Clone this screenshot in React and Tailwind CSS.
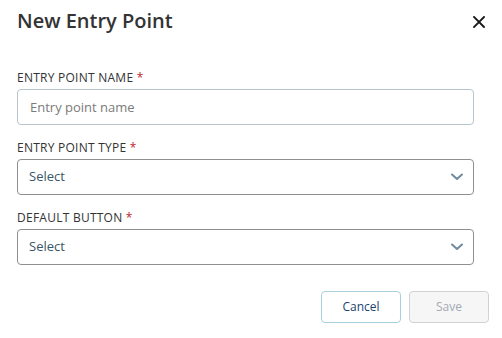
import { useState } from "react";

function Chevron() {
    return (
        <svg width="12" height="8" viewBox="0 0 12 8" fill="none" className="shrink-0">
            <path d="M1 1.5 L6 6 L11 1.5" stroke="#6f8ba0" strokeWidth="2" strokeLinecap="round" strokeLinejoin="round" />
        </svg>
    );
}

function Label({ children }) {
    return (
        <div className="h-4 mb-[3px] text-[12px] leading-4 text-[#333333] tracking-[0.25px]">
            {children} <span className="text-[#c0262d]">*</span>
        </div>
    );
}

function SelectBox({ value }) {
    return (
        <button
            type="button"
            className="w-full h-[36px] flex items-center justify-between pl-[11px] pr-[10px] border border-[#8f8f8f] rounded-[4px] bg-white text-left"
        >
            <span className="text-[13px] text-[#3a5567]">{value}</span>
            <Chevron />
        </button>
    );
}

export default function App() {
    const [name, setName] = useState("");
    return (
        <div className="w-[502px] h-[338px] bg-white font-['Open_Sans',sans-serif] flex flex-col">
            <div className="flex items-start justify-between pl-[17px] pr-[17px] pt-[7px]">
                <h2 className="text-[20px] leading-[28px] font-semibold text-[#333333]">New Entry Point</h2>
                <button type="button" className="mt-[9px] w-[12px] h-[12px] flex items-center justify-center">
                    <svg width="12" height="12" viewBox="0 0 12 12">
                        <path d="M1 1 L11 11 M11 1 L1 11" stroke="#1a1a1a" strokeWidth="1.9" strokeLinecap="square" />
                    </svg>
                </button>
            </div>

            <div className="flex flex-col gap-[15px] pl-[17px] pr-[28px] mt-[35px]">
                <div>
                    <Label>ENTRY POINT NAME</Label>
                    <input
                        value={name}
                        onChange={(e) => setName(e.target.value)}
                        placeholder="Entry point name"
                        className="w-full h-[36px] px-[12px] border border-[#b7c5cf] rounded-[4px] text-[13px] text-[#333333] placeholder:text-[#7b7b7b] outline-none"
                    />
                </div>
                <div>
                    <Label>ENTRY POINT TYPE</Label>
                    <SelectBox value="Select" />
                </div>
                <div>
                    <Label>DEFAULT BUTTON</Label>
                    <SelectBox value="Select" />
                </div>
            </div>

            <div className="flex justify-end gap-2 pr-[13px] mt-[26px]">
                <button
                    type="button"
                    className="w-[80px] h-[32px] rounded-[4px] border border-[#a9cedd] bg-white text-[12px] text-[#1b4470] font-medium"
                >
                    Cancel
                </button>
                <button
                    type="button"
                    disabled
                    className="w-[80px] h-[32px] rounded-[4px] border border-[#d2d2d2] bg-[#f6f6f6] text-[12px] text-[#a3abb3] font-medium"
                >
                    Save
                </button>
            </div>
        </div>
    );
}
